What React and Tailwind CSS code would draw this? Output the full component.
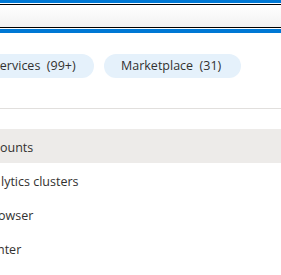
import React from 'react';

const rows = [
  { label: 'ounts', shift: 'ml-0', active: true },
  { label: 'lytics clusters', shift: 'ml-px' },
  { label: 'owser', shift: '-ml-[2px]' },
  { label: 'nter', shift: '-ml-[3px]' },
];

const Pill = ({ label, count, className = '' }) => (
  <div className={`flex h-6 shrink-0 items-center rounded-full bg-[#e5f1fb] pl-[17px] text-[12.5px] text-[#323130] ${className}`}>
    <span className="whitespace-pre pt-px">{label}  ({count})</span>
  </div>
);

export default function App() {
  return (
    <div
      className="h-[275px] w-[281px] overflow-hidden bg-white"
      style={{ fontFamily: '"Open Sans", "Noto Sans", sans-serif' }}
    >
      {/* Search box with focus ring */}
      <div className="h-[3px] bg-[#0078d4]" />
      <div className="h-px bg-white" />
      <div className="h-px bg-black" />
      <div className="h-[22px] bg-gradient-to-b from-white to-[#f2f2f2]" />
      <div className="h-px bg-black" />
      <div className="h-px bg-white" />
      <div className="h-[4px] bg-[#0078d4]" />

      {/* Filter pills */}
      <div className="mt-[21px] flex gap-[10px]">
        <Pill label="Services" count="99+" className="-ml-[24px] w-[118px]" />
        <Pill label="Marketplace" count="31" className="w-[137px]" />
      </div>

      <div className="mt-[30px] h-px bg-[#e1dfdd]" />

      {/* Results */}
      <div className="mt-[20px] flex flex-col">
        {rows.map((row) => (
          <div
            key={row.label}
            className={`flex h-[34px] items-center text-[12.5px] text-[#323130] ${row.active ? 'bg-[#edebe9]' : ''}`}
          >
            <span className={`whitespace-nowrap pt-[4px] ${row.shift}`}>{row.label}</span>
          </div>
        ))}
      </div>
    </div>
  );
}
